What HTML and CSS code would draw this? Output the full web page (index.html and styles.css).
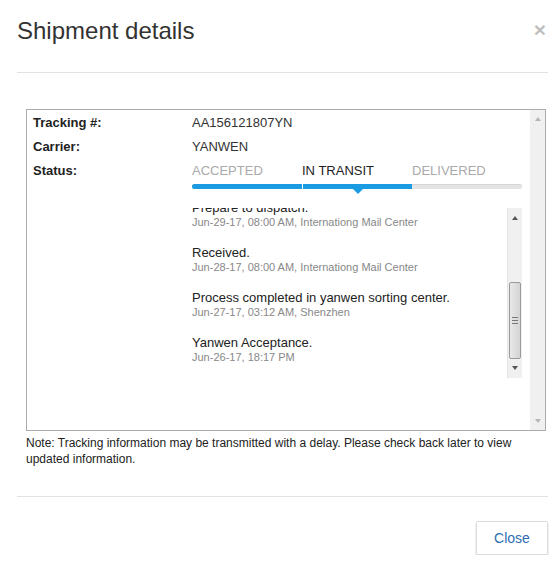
FILE: index.html
```html
<!DOCTYPE html>
<html lang="en">
<head>
    <meta charset="UTF-8">
    <meta name="viewport" content="width=device-width, initial-scale=1.0">
    <title>Shipment details</title>
    <link rel="stylesheet" href="styles.css">
</head>
<body>
    <div class="modal">
        <div class="modal-header">
            <h4 class="modal-title">Shipment details</h4>
            <button class="close" type="button">&times;</button>
        </div>

        <div class="modal-body">
            <div class="tracking-box">
                <div class="tracking-content">
                    <div class="row">
                        <span class="label">Tracking #:</span>
                        <span class="value">AA156121807YN</span>
                    </div>
                    <div class="row">
                        <span class="label">Carrier:</span>
                        <span class="value">YANWEN</span>
                    </div>
                    <div class="row">
                        <span class="label">Status:</span>
                        <div class="status">
                            <div class="steps">
                                <span class="step">ACCEPTED</span>
                                <span class="step current">IN TRANSIT</span>
                                <span class="step">DELIVERED</span>
                            </div>
                            <div class="progress">
                                <div class="seg done"></div>
                                <div class="seg done current"></div>
                                <div class="seg"></div>
                            </div>

                            <div class="events">
                                <div class="events-view">
                                    <div class="events-list">
                                        <div class="event">
                                            <div class="event-title">Prepare to dispatch.</div>
                                            <div class="event-info">Jun-29-17, 08:00 AM, Internationg Mail Center</div>
                                        </div>
                                        <div class="event">
                                            <div class="event-title">Received.</div>
                                            <div class="event-info">Jun-28-17, 08:00 AM, Internationg Mail Center</div>
                                        </div>
                                        <div class="event">
                                            <div class="event-title">Process completed in yanwen sorting center.</div>
                                            <div class="event-info">Jun-27-17, 03:12 AM, Shenzhen</div>
                                        </div>
                                        <div class="event">
                                            <div class="event-title">Yanwen Acceptance.</div>
                                            <div class="event-info">Jun-26-17, 18:17 PM</div>
                                        </div>
                                    </div>
                                </div>
                                <div class="scrollbar inner">
                                    <span class="arrow up"></span>
                                    <div class="track">
                                        <div class="thumb"><span class="grip"></span></div>
                                    </div>
                                    <span class="arrow down"></span>
                                </div>
                            </div>
                        </div>
                    </div>
                </div>

                <div class="scrollbar outer">
                    <span class="arrow up"></span>
                    <span class="arrow down"></span>
                </div>
            </div>

            <p class="note">Note: Tracking information may be transmitted with a delay. Please check back later to view updated information.</p>
        </div>

        <div class="modal-footer">
            <button class="btn" type="button">Close</button>
        </div>
    </div>
</body>
</html>
```

FILE: styles.css
```css
body {
    margin: 0;
    font-family: "Liberation Sans", Arial, sans-serif;
    color: #333;
    background-color: #fff;
}

.modal {
    width: 531px;
    margin-left: 17px;
}

/* header */
.modal-header {
    display: flex;
    justify-content: space-between;
    align-items: flex-start;
    height: 72px;
    border-bottom: 1px solid #e2e2e2;
}

.modal-title {
    margin: 17px 0 0 0;
    font-size: 24px;
    font-weight: normal;
    line-height: 28px;
    color: #333;
}

.close {
    margin: 19px 2px 0 0;
    padding: 0;
    border: none;
    background: none;
    font-family: "Liberation Sans", Arial, sans-serif;
    font-size: 21px;
    font-weight: bold;
    line-height: 1;
    color: #000;
    opacity: 0.25;
    cursor: pointer;
}

/* body */
.modal-body {
    padding: 36px 2px 29px 9px;
}

.tracking-box {
    display: flex;
    height: 322px;
    box-sizing: border-box;
    border: 1px solid #ababab;
}

.tracking-content {
    flex: 1;
    padding: 1px 0 0 6px;
}

.row {
    display: flex;
    font-size: 13px;
    line-height: 24px;
}

.label {
    width: 159px;
    font-weight: bold;
    color: #222;
}

.value {
    color: #333;
}

.status {
    width: 330px;
}

.steps {
    display: flex;
}

.step {
    width: 110px;
    color: #aaa;
}

.step.current {
    color: #222;
}

.progress {
    display: flex;
    height: 5px;
    margin-top: 1px;
    border-radius: 3px;
    background-color: #e4e4e4;
    box-shadow: inset 0 1px 0 #d6d6d6;
}

.seg {
    position: relative;
    width: 110px;
}

.seg.done {
    background-color: #1b9be2;
}

.seg.done:first-child {
    border-radius: 3px 0 0 3px;
}

.seg.done + .seg.done {
    border-left: 1px solid #fff;
}

.seg.current::after {
    content: "";
    position: absolute;
    left: 50%;
    top: 5px;
    margin-left: -5px;
    border-left: 5px solid transparent;
    border-right: 5px solid transparent;
    border-top: 5px solid #1b9be2;
}

/* events list */
.events {
    display: flex;
    height: 170px;
    margin-top: 19px;
}

.events-view {
    flex: 1;
    overflow: hidden;
}

.events-list {
    margin-top: -8px;
}

.event {
    margin-bottom: 15px;
}

.event-title {
    font-size: 13px;
    line-height: 15px;
    color: #222;
}

.event-info {
    font-size: 11px;
    line-height: 15px;
    color: #888;
}

/* fake scrollbars */
.scrollbar {
    display: flex;
    flex-direction: column;
    align-items: center;
    width: 15px;
    background-color: #f0f0f0;
}

.scrollbar.inner {
    border-left: 1px solid #e6e6e6;
    box-sizing: border-box;
}

.scrollbar.outer {
    justify-content: space-between;
    padding: 7px 0;
    box-sizing: border-box;
}

.arrow {
    width: 0;
    height: 0;
    border-left: 3px solid transparent;
    border-right: 3px solid transparent;
}

.arrow.up {
    border-bottom: 4px solid #555;
}

.arrow.down {
    border-top: 4px solid #555;
}

.scrollbar.inner .arrow.up {
    margin-top: 8px;
}

.scrollbar.inner .arrow.down {
    margin: 7px 0 8px;
}

.scrollbar.outer .arrow.up {
    border-bottom-color: #b5b5b5;
}

.scrollbar.outer .arrow.down {
    border-top-color: #b5b5b5;
}

.track {
    flex: 1;
    width: 100%;
    display: flex;
    flex-direction: column;
    justify-content: flex-end;
}

.thumb {
    display: flex;
    align-items: center;
    justify-content: center;
    height: 75px;
    margin: 0 1px;
    border: 1px solid #9a9a9a;
    border-radius: 2px;
    background: linear-gradient(to right, #e8e8e8, #d4d4d4);
}

.grip {
    width: 6px;
    height: 5px;
    border-top: 1px solid #777;
    border-bottom: 1px solid #777;
    background: linear-gradient(#777, #777) center / 100% 1px no-repeat;
}

.note {
    margin: 4px 0 0 0;
    font-size: 12px;
    line-height: 16px;
    color: #222;
}

/* footer */
.modal-footer {
    display: flex;
    justify-content: flex-end;
    padding-top: 24px;
    border-top: 1px solid #e2e2e2;
}

.btn {
    width: 72px;
    height: 34px;
    padding: 0;
    border: 1px solid #dcdcdc;
    border-radius: 2px;
    background-color: #fff;
    box-shadow: 0 1px 2px rgba(0, 0, 0, 0.2);
    font-family: "Liberation Sans", Arial, sans-serif;
    font-size: 14px;
    color: #2e6db4;
    cursor: pointer;
}
```
